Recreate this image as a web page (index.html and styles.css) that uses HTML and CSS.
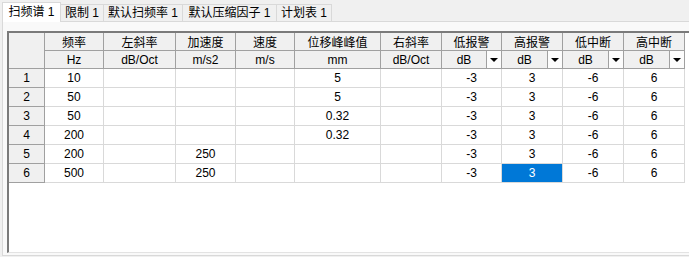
FILE: index.html
```html
<!DOCTYPE html>
<html lang="zh-CN">
<head>
    <meta charset="UTF-8">
    <title>扫频谱</title>
    <link rel="stylesheet" href="styles.css">
</head>
<body>

    <div class="tabs">
        <div class="tab active">扫频谱 1</div>
        <div class="tab">限制 1</div>
        <div class="tab">默认扫频率 1</div>
        <div class="tab">默认压缩因子 1</div>
        <div class="tab">计划表 1</div>
    </div>

    <div class="panel">
        <div class="grid" id="grid">
            <div class="corner"></div>
            <div class="hd">频率</div>
            <div class="hd">左斜率</div>
            <div class="hd">加速度</div>
            <div class="hd">速度</div>
            <div class="hd">位移峰峰值</div>
            <div class="hd">右斜率</div>
            <div class="hd">低报警</div>
            <div class="hd">高报警</div>
            <div class="hd">低中断</div>
            <div class="hd">高中断</div>

            <div class="hd">Hz</div>
            <div class="hd">dB/Oct</div>
            <div class="hd">m/s2</div>
            <div class="hd">m/s</div>
            <div class="hd">mm</div>
            <div class="hd">dB/Oct</div>
            <div class="hd combo"><span>dB</span><i class="drop"></i></div>
            <div class="hd combo"><span>dB</span><i class="drop"></i></div>
            <div class="hd combo"><span>dB</span><i class="drop"></i></div>
            <div class="hd combo"><span>dB</span><i class="drop"></i></div>
        </div>
    </div>

    <script>
        // rows of the sweep table: freq, left slope, accel, velocity, displacement, right slope, alarms, aborts
        const rows = [
            ['10', '', '', '', '5', '', '-3', '3', '-6', '6'],
            ['50', '', '', '', '5', '', '-3', '3', '-6', '6'],
            ['50', '', '', '', '0.32', '', '-3', '3', '-6', '6'],
            ['200', '', '', '', '0.32', '', '-3', '3', '-6', '6'],
            ['200', '', '250', '', '', '', '-3', '3', '-6', '6'],
            ['500', '', '250', '', '', '', '-3', '3', '-6', '6']
        ];
        const selected = { row: 5, col: 7 };

        const grid = document.getElementById('grid');
        rows.forEach(function(values, r) {
            const num = document.createElement('div');
            num.className = 'rowhd';
            num.textContent = r + 1;
            grid.appendChild(num);

            values.forEach(function(v, c) {
                const cell = document.createElement('div');
                cell.className = 'cell';
                if (r === selected.row && c === selected.col) {
                    cell.classList.add('selected');
                }
                cell.textContent = v;
                grid.appendChild(cell);
            });
        });
    </script>
</body>
</html>
```

FILE: styles.css
```css
body {
    margin: 0;
    background-color: #f0f0f0;
    font-family: "Liberation Sans", "Noto Sans CJK SC", sans-serif;
    font-size: 12px;
    color: black;
    height: 257px;
    overflow: hidden;
}

/* tab strip */
.tabs {
    display: flex;
    align-items: flex-end;
    height: 21px;
    padding-left: 2px;
}

.tab {
    height: 17px;
    line-height: 17px;
    box-sizing: border-box;
    margin-right: -1px;
    border: 1px solid #d9d9d9;
    border-bottom: none;
    background-color: #f0f0f0;
    text-align: center;
    white-space: nowrap;
}

.tab:nth-child(1) { width: 59px; }
.tab:nth-child(2) { width: 44px; }
.tab:nth-child(3) { width: 80px; }
.tab:nth-child(4) { width: 95px; }
.tab:nth-child(5) { width: 56px; }

.tab.active {
    height: 20px;
    line-height: 19px;
    background-color: white;
    position: relative;
    z-index: 1;
    margin-bottom: -1px;
}

/* tab page */
.panel {
    margin-left: 2px;
    width: 700px;
    height: 235px;
    box-sizing: border-box;
    border: 1px solid #d9d9d9;
    background-color: #f9f9f9;
    padding: 9px 0 0 4px;
}

.grid {
    display: grid;
    grid-template-columns: 36px 59px 72px 60px 59px 86px 61px 60px 61px 61px 61px;
    grid-template-rows: 18px 18px;
    grid-auto-rows: 19px;
    align-content: start;
    height: 222px;
    box-sizing: border-box;
    border-left: 2px solid #7a7a7a;
    border-top: 2px solid #7a7a7a;
    border-bottom: 1px solid #e3e3e3;
    background-color: white;
}

.grid > div {
    box-sizing: border-box;
    border-right: 1px solid #d9d9d9;
    border-bottom: 1px solid #d9d9d9;
    display: flex;
    align-items: center;
    justify-content: center;
    white-space: nowrap;
}

.grid > .corner {
    grid-row: span 2;
    background-color: #f0f0f0;
    border-color: #a0a0a0;
}

.grid > .hd {
    background-color: #f0f0f0;
    border-color: #a0a0a0;
}

.grid > .rowhd {
    background-color: #f0f0f0;
    border-color: #a0a0a0;
}

.grid > .selected {
    background-color: #0078d7;
    color: white;
}

/* unit picker in the header */
.grid > .combo {
    justify-content: stretch;
}

.combo span {
    flex: 1;
    text-align: center;
}

.drop {
    width: 15px;
    height: 100%;
    box-sizing: border-box;
    border-left: 1px solid #a0a0a0;
    background-color: #fcfcfc;
    display: flex;
    align-items: center;
    justify-content: center;
}

.drop::after {
    content: "";
    border-left: 4px solid transparent;
    border-right: 4px solid transparent;
    border-top: 4px solid black;
}
```
